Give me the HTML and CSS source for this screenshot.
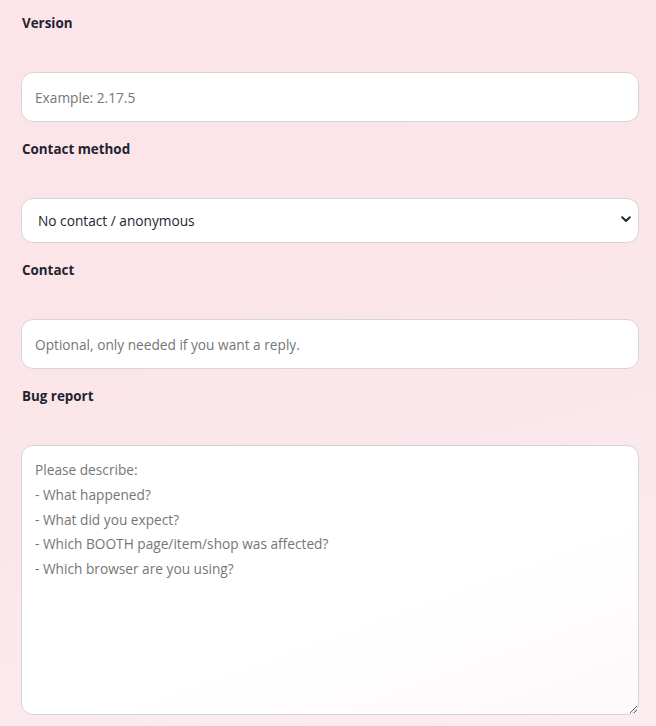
FILE: index.html
```html
<!DOCTYPE html>
<html lang="en">
<head>
<meta charset="utf-8">
<title>Bug report</title>
<link rel="stylesheet" href="styles.css">
</head>
<body>
<form class="form">
  <div class="field">
    <label class="label" for="version">Version</label>
    <input class="control input" id="version" type="text" placeholder="Example: 2.17.5">
  </div>
  <div class="field">
    <label class="label" for="method">Contact method</label>
    <div class="select-wrap">
      <select class="control select" id="method">
        <option>No contact / anonymous</option>
        <option>Email</option>
      </select>
      <svg class="chevron" width="10" height="7" viewBox="0 0 10 7"><path d="M1.2 1.3 L5 5 L8.8 1.3" fill="none" stroke="#222833" stroke-width="2" stroke-linecap="round" stroke-linejoin="round"/></svg>
    </div>
  </div>
  <div class="field">
    <label class="label" for="contact">Contact</label>
    <input class="control input" id="contact" type="text" placeholder="Optional, only needed if you want a reply.">
  </div>
  <div class="field">
    <label class="label" for="report">Bug report</label>
    <textarea class="control textarea" id="report" placeholder="Please describe:
- What happened?
- What did you expect?
- Which BOOTH page/item/shop was affected?
- Which browser are you using?"></textarea>
  </div>
</form>
</body>
</html>
```

FILE: styles.css
```css
html, body {
  margin: 0;
  padding: 0;
  height: 100%;
}
body {
  background: linear-gradient(165deg, #fce4e8 0%, #fbe6ea 55%, #fcedf0 100%);
  font-family: "Open Sans", "Noto Sans", sans-serif;
  overflow: hidden;
}
.form {
  display: flex;
  flex-direction: column;
  gap: 18px;
  padding: 14px 17px 0 21px;
}
.field {
  display: flex;
  flex-direction: column;
}
.label {
  font-size: 13.4px;
  font-weight: 700;
  line-height: 18px;
  color: #1f2430;
  margin-bottom: 40px;
  padding-left: 1px;
}
.control {
  box-sizing: border-box;
  width: 100%;
  border: 1px solid #d5d5d8;
  border-radius: 12px;
  background: #ffffff;
  font-family: "Open Sans", "Noto Sans", sans-serif;
  font-size: 13.7px;
  color: #1f2430;
  outline: none;
  margin: 0;
}
.control::placeholder {
  color: #767676;
  opacity: 1;
}
.input {
  height: 50px;
  padding: 0 13px;
}
.select-wrap {
  position: relative;
}
.select {
  height: 45px;
  padding: 0 30px 0 16px;
  appearance: none;
  -webkit-appearance: none;
}
.chevron {
  position: absolute;
  right: 8px;
  top: 18px;
  pointer-events: none;
}
.textarea {
  height: 270px;
  padding: 12px 13px 10px;
  line-height: 24.75px;
  resize: vertical;
  background: linear-gradient(160deg, #ffffff 60%, #fdf8f9 100%);
  display: block;
}
```
